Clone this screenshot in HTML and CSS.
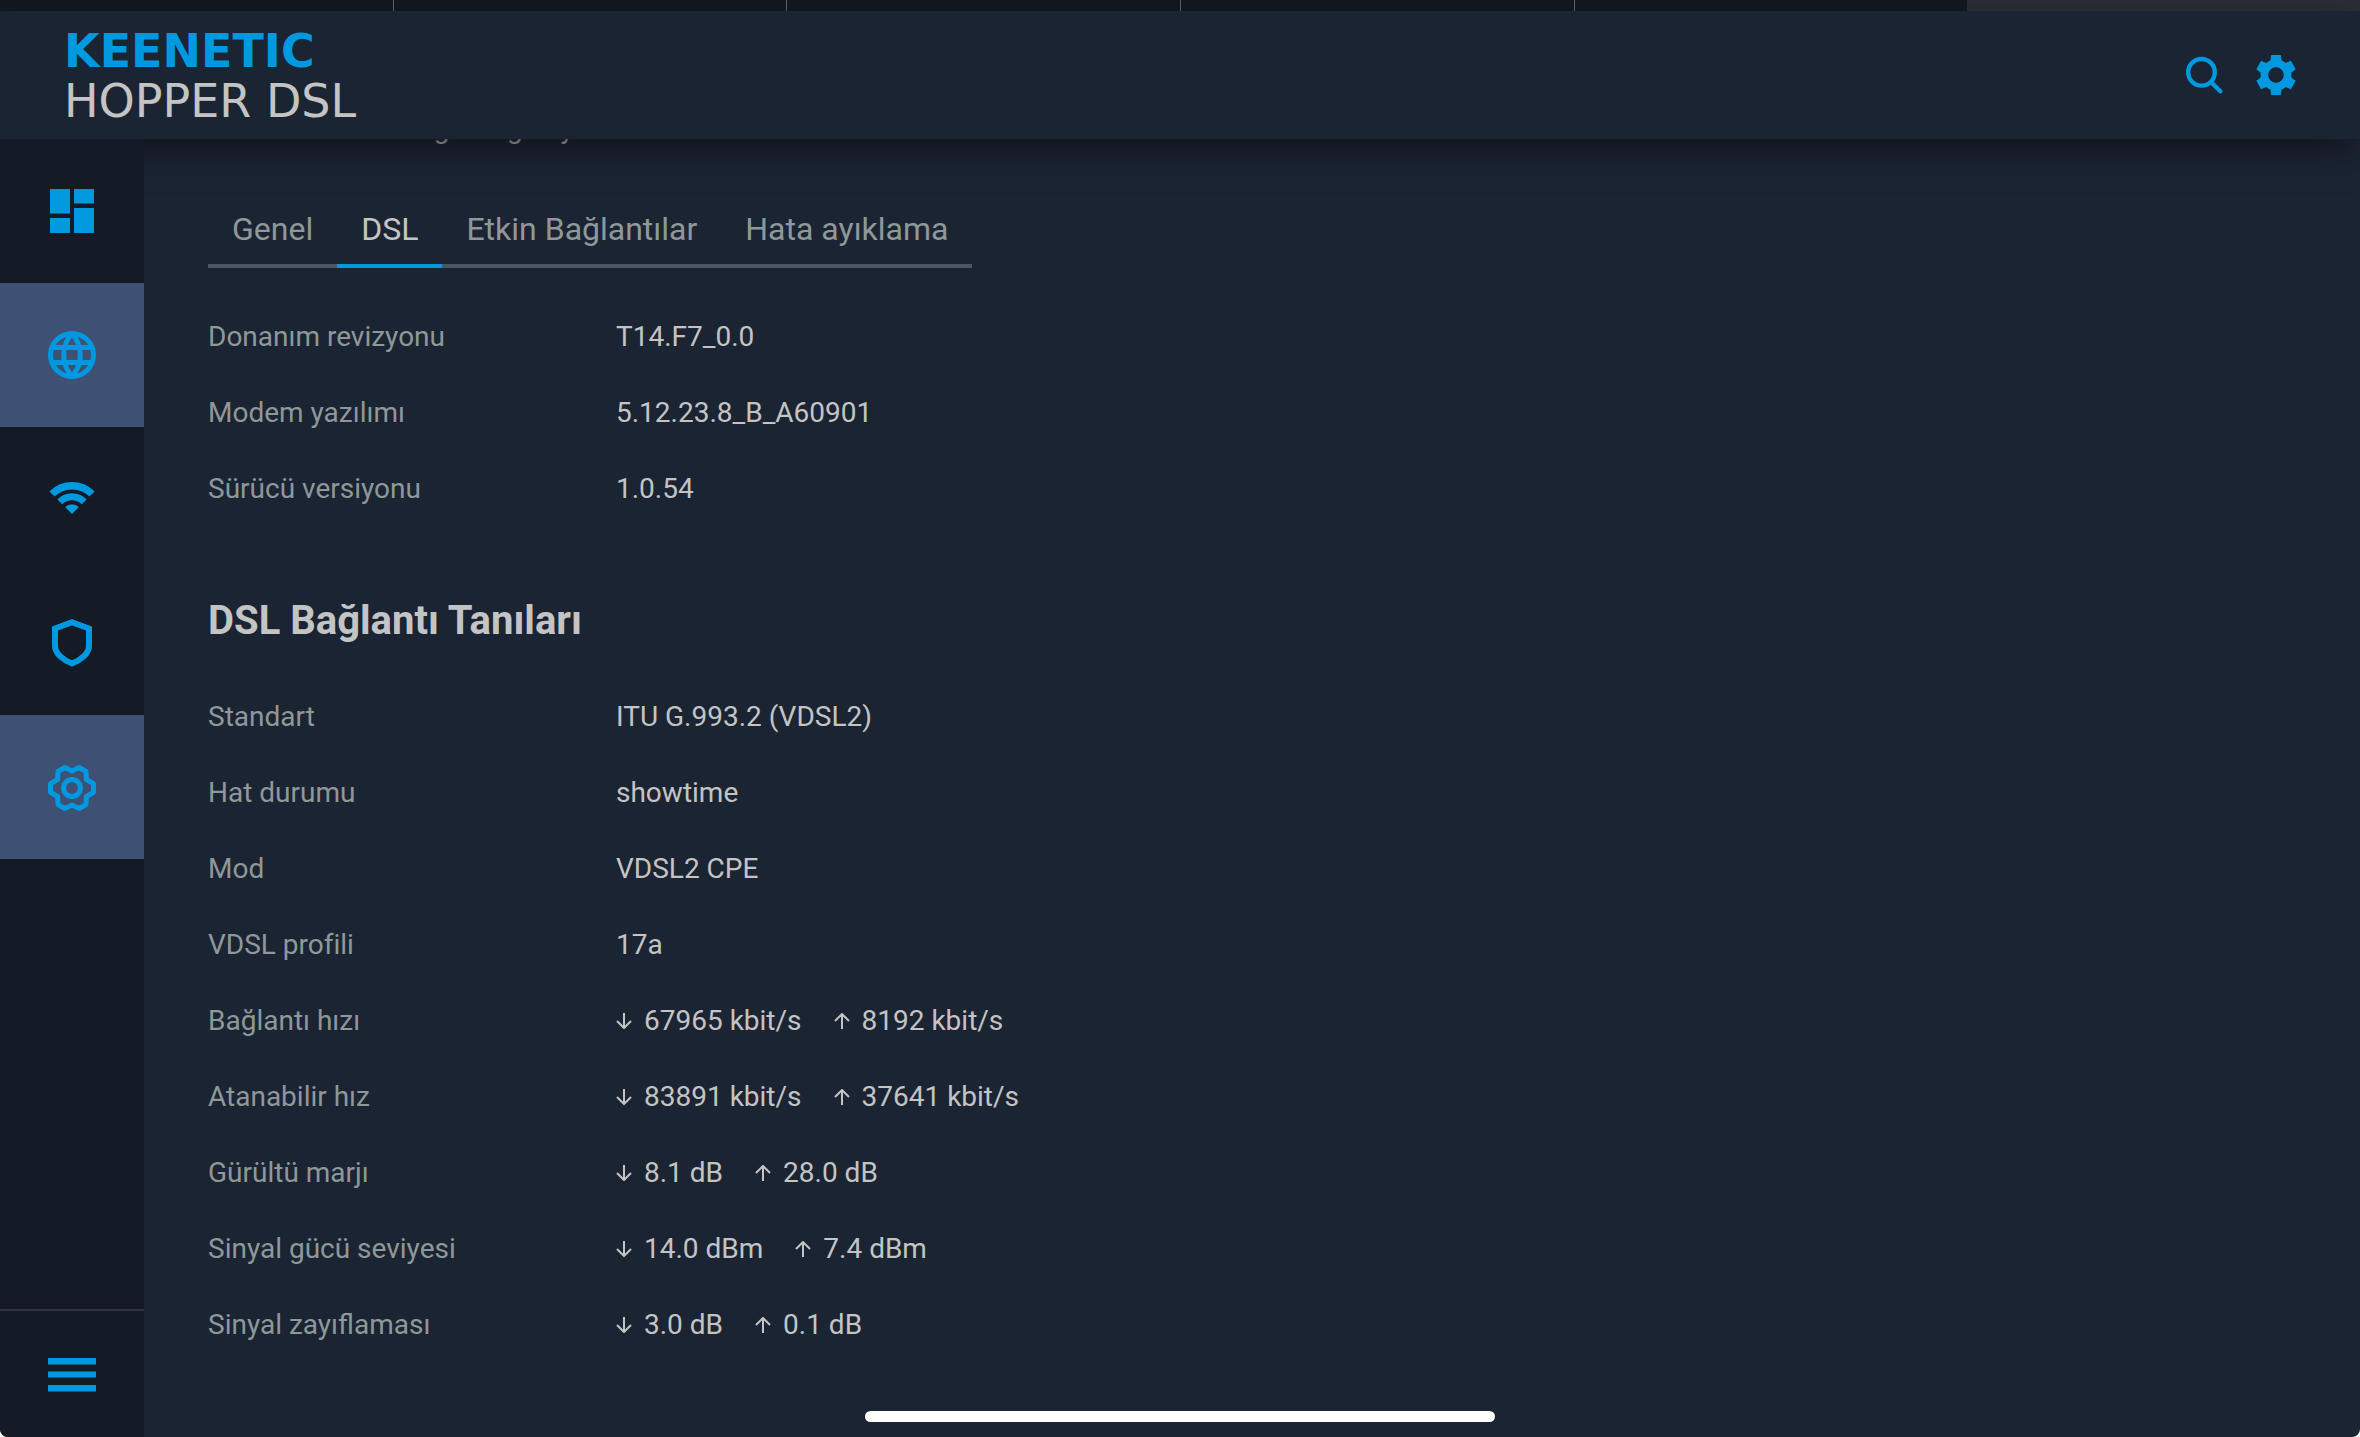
FILE: index.html
```html
<!DOCTYPE html>
<html lang="tr">
    <head>
        <title>Keenetic Hopper DSL</title>
        <meta charset="UTF-8">
        <meta name="viewport" content="width=device-width, initial-scale=1">
        <link rel="stylesheet" href="styles.css">
    </head>
    <body>

        <!-- arrow icons reused in the table -->
        <svg class="sprite" width="0" height="0" aria-hidden="true">
            <symbol id="down" viewBox="0 0 16 16">
                <path d="M8 0V15M1 8l7 7 7-7" fill="none" stroke="currentColor" stroke-width="2"/>
            </symbol>
            <symbol id="up" viewBox="0 0 16 16">
                <path d="M8 16V1M1 8l7-7 7 7" fill="none" stroke="currentColor" stroke-width="2"/>
            </symbol>
        </svg>

        <div class="browser-tabs">
            <span></span><span></span><span></span><span></span><span></span><span class="current"></span>
        </div>

        <header class="header">
            <a href="#" class="logo">
                <span class="brand">KEENETIC</span>
                <span class="model">HOPPER DSL</span>
            </a>
            <div class="tools">
                <button aria-label="Ara">
                    <svg width="48" height="48" viewBox="0 0 48 48" fill="none" stroke="currentColor">
                        <circle cx="21.5" cy="21.3" r="13.3" stroke-width="4.4"/>
                        <path d="M31 31l9.300 9.300" stroke-width="4.400" stroke-linecap="round"/>
                    </svg>
                </button>
                <button aria-label="Ayarlar">
                    <svg width="48" height="48" viewBox="-24 -24 48 48" fill="currentColor">
                        <circle r="11.6" fill="none" stroke="currentColor" stroke-width="7.6"/>
                        <path id="tooth" d="M-4.800-20H4.800L5.600-14.500 8-12.500H-8L-5.600-14.500z"/>
                        <use href="#tooth" transform="rotate(60)"/>
                        <use href="#tooth" transform="rotate(120)"/>
                        <use href="#tooth" transform="rotate(180)"/>
                        <use href="#tooth" transform="rotate(240)"/>
                        <use href="#tooth" transform="rotate(300)"/>
                    </svg>
                </button>
            </div>
        </header>

        <div class="layout">
            <nav class="sidebar">
                <a href="#" aria-label="Panel">
                    <svg width="48" height="48" viewBox="-24 -24 48 48" fill="currentColor">
                        <path d="M-22-22h20v24.500h-20zM-22 7h20v15h-20zM2-22h20v14.500h-20zM2-3h20v25h-20z"/>
                    </svg>
                </a>
                <a href="#" class="active" aria-label="İnternet">
                    <svg width="48" height="48" viewBox="-24 -24 48 48" fill="none" stroke="currentColor" stroke-width="5">
                        <circle r="21.5"/>
                        <path d="M-21-7.500H21M-21 7.500H21M0-21.500A32 32 0 0 1 0 21.500A32 32 0 0 1 0-21.500"/>
                    </svg>
                </a>
                <a href="#" aria-label="Wi-Fi">
                    <svg width="48" height="48" viewBox="-24 -24 48 48" fill="none" stroke="currentColor">
                        <path d="M-20-5A28.200 28.200 0 0 1 20-5" stroke-width="7.400"/>
                        <path d="M-12.200 2.800A17.300 17.300 0 0 1 12.200 2.800" stroke-width="6.800"/>
                        <path d="M0 15L-6.900 8.100A9.700 9.700 0 0 1 6.900 8.100z" fill="currentColor" stroke="none"/>
                    </svg>
                </a>
                <a href="#" aria-label="Güvenlik">
                    <svg width="48" height="48" viewBox="-24 -24 48 48" fill="none" stroke="currentColor" stroke-width="6">
                        <path d="M0-20.800L17-14.500V3C17 10.500 8.500 17.500 0 20.500C-8.500 17.500-17 10.500-17 3V-14.500z"/>
                    </svg>
                </a>
                <a href="#" class="active" aria-label="Yönetim">
                    <svg width="48" height="48" viewBox="-24 -25 48 48" fill="none" stroke="currentColor" stroke-width="5" stroke-linejoin="round">
                        <circle r="8.4"/>
                        <path d="M0-17L7-20.500 14-16.500 14.300-8.500 21.500-4.300V4.300L14.300 8.500 14 16.500 7 20.500 0 17-7 20.500-14 16.500-14.300 8.500-21.500 4.300V-4.300L-14.300-8.500-14-16.500-7-20.500z"/>
                    </svg>
                </a>
                <button class="menu" aria-label="Menü">
                    <svg width="48" height="48" viewBox="-24 -24 48 48" fill="currentColor">
                        <path d="M-24-16h48v6.500h-48zM-24-2.500h48v6h-48zM-24 11h48v6.500h-48z"/>
                    </svg>
                </button>
            </nav>

            <main class="content">
                <p class="intro">DSL modem ve bağ ve ağda yeni durum</p>

                <nav class="tabs">
                    <a href="#">Genel</a>
                    <a href="#" class="active">DSL</a>
                    <a href="#">Etkin Bağlantılar</a>
                    <a href="#">Hata ayıklama</a>
                </nav>

                <table class="info">
                    <tr><th>Donanım revizyonu</th><td>T14.F7_0.0</td></tr>
                    <tr><th>Modem yazılımı</th><td>5.12.23.8_B_A60901</td></tr>
                    <tr><th>Sürücü versiyonu</th><td>1.0.54</td></tr>
                </table>

                <h2>DSL Bağlantı Tanıları</h2>

                <table class="info">
                    <tr><th>Standart</th><td>ITU G.993.2 (VDSL2)</td></tr>
                    <tr><th>Hat durumu</th><td>showtime</td></tr>
                    <tr><th>Mod</th><td>VDSL2 CPE</td></tr>
                    <tr><th>VDSL profili</th><td>17a</td></tr>
                    <tr>
                        <th>Bağlantı hızı</th>
                        <td><div class="rates">
                            <span><svg><use href="#down"/></svg>67965 kbit/s</span>
                            <span><svg><use href="#up"/></svg>8192 kbit/s</span>
                        </div></td>
                    </tr>
                    <tr>
                        <th>Atanabilir hız</th>
                        <td><div class="rates">
                            <span><svg><use href="#down"/></svg>83891 kbit/s</span>
                            <span><svg><use href="#up"/></svg>37641 kbit/s</span>
                        </div></td>
                    </tr>
                    <tr>
                        <th>Gürültü marjı</th>
                        <td><div class="rates">
                            <span><svg><use href="#down"/></svg>8.1 dB</span>
                            <span><svg><use href="#up"/></svg>28.0 dB</span>
                        </div></td>
                    </tr>
                    <tr>
                        <th>Sinyal gücü seviyesi</th>
                        <td><div class="rates">
                            <span><svg><use href="#down"/></svg>14.0 dBm</span>
                            <span><svg><use href="#up"/></svg>7.4 dBm</span>
                        </div></td>
                    </tr>
                    <tr>
                        <th>Sinyal zayıflaması</th>
                        <td><div class="rates">
                            <span><svg><use href="#down"/></svg>3.0 dB</span>
                            <span><svg><use href="#up"/></svg>0.1 dB</span>
                        </div></td>
                    </tr>
                </table>
            </main>
        </div>

        <div class="home-bar"></div>

    </body>
</html>
```
FILE: styles.css
```css
* {
    box-sizing: border-box;
}
html {
    background: white;
}
body {
    margin: 0;
    min-height: 100vh;
    display: flex;
    flex-direction: column;
    font-family: Roboto, sans-serif;
    font-size: 28px;
    color: #c4c4c4;
    background: #1b2433;
    border-radius: 0 0 8px 8px;
}
html, body {
    overflow: hidden;
}
a {
    color: inherit;
    text-decoration: none;
}
button {
    padding: 0;
    border: none;
    background: none;
    color: #0099e0;
    cursor: pointer;
}
svg {
    display: block;
}
.sprite {
    position: absolute;
}

/* bottom edge of the browser tabs */
.browser-tabs {
    display: flex;
    height: 11px;
    background: #121720;
}
    .browser-tabs span {
        flex: 1;
        border-left: 1px solid #5a5f68;
    }
    .browser-tabs span:first-child {
        border-left: none;
    }
    .browser-tabs .current {
        border-left: none;
        background: #2a2d35;
    }

.header {
    position: relative;
    z-index: 1;
    height: 128px;
    padding: 0 60px 0 64px;
    display: flex;
    justify-content: space-between;
    align-items: center;
    background: #1b2433;
    box-shadow: 0 16px 32px -8px rgba(15, 17, 23, .9);
}
    .logo {
        margin-top: 2px;
        font-family: 'DejaVu Sans', sans-serif;
        font-size: 46px;
        line-height: 50px;
    }
        .logo span {
            display: block;
        }
        .logo .brand {
            font-weight: bold;
            color: #0099e0;
        }
    .tools {
        display: flex;
        gap: 24px;
    }

.layout {
    flex: 1;
    display: flex;
}
.sidebar {
    position: relative;
    z-index: 2;
    width: 144px;
    flex-shrink: 0;
    display: flex;
    flex-direction: column;
    background: #151b26;
    color: #0099e0;
}
    .sidebar a, .sidebar .menu {
        display: flex;
        justify-content: center;
        align-items: center;
        height: 144px;
    }
    .sidebar .active {
        background: #3e5073;
    }
    .sidebar .menu {
        height: 128px;
        margin-top: auto;
        border-top: 2px solid #31343f;
    }

.content {
    flex: 1;
    padding: 0 64px;
}
    /* scrolled away under the header */
    .intro {
        margin: -30px 0 60px;
        line-height: 40px;
        color: #e0e0e0;
    }
    .tabs {
        display: inline-flex;
        vertical-align: top;
        font-size: 32px;
        line-height: 40px;
        color: #8f9899;
    }
        .tabs a {
            padding: 0 24px 15px;
            border-bottom: 4px solid #50545f;
        }
        .tabs .active {
            color: #c4c4c4;
            border-color: #0099e0;
        }
    .content h2 {
        margin: 70px 0 34px;
        font-size: 40px;
        line-height: 48px;
        font-weight: bold;
    }

.info {
    border-collapse: collapse;
    line-height: 76px;
}
    .tabs + .info {
        margin-top: 31px;
    }
    .info th, .info td {
        padding: 0;
        text-align: left;
        font-weight: normal;
    }
    .info th {
        width: 408px;
        color: #8f9899;
    }
    .rates {
        display: flex;
        gap: 32px;
    }
        .rates span {
            display: flex;
            align-items: center;
            gap: 12px;
        }
        .rates svg {
            width: 16px;
            height: 16px;
        }

.home-bar {
    position: fixed;
    bottom: 15px;
    left: 50%;
    width: 630px;
    height: 11px;
    margin-left: -315px;
    border-radius: 6px;
    background: white;
}
```
